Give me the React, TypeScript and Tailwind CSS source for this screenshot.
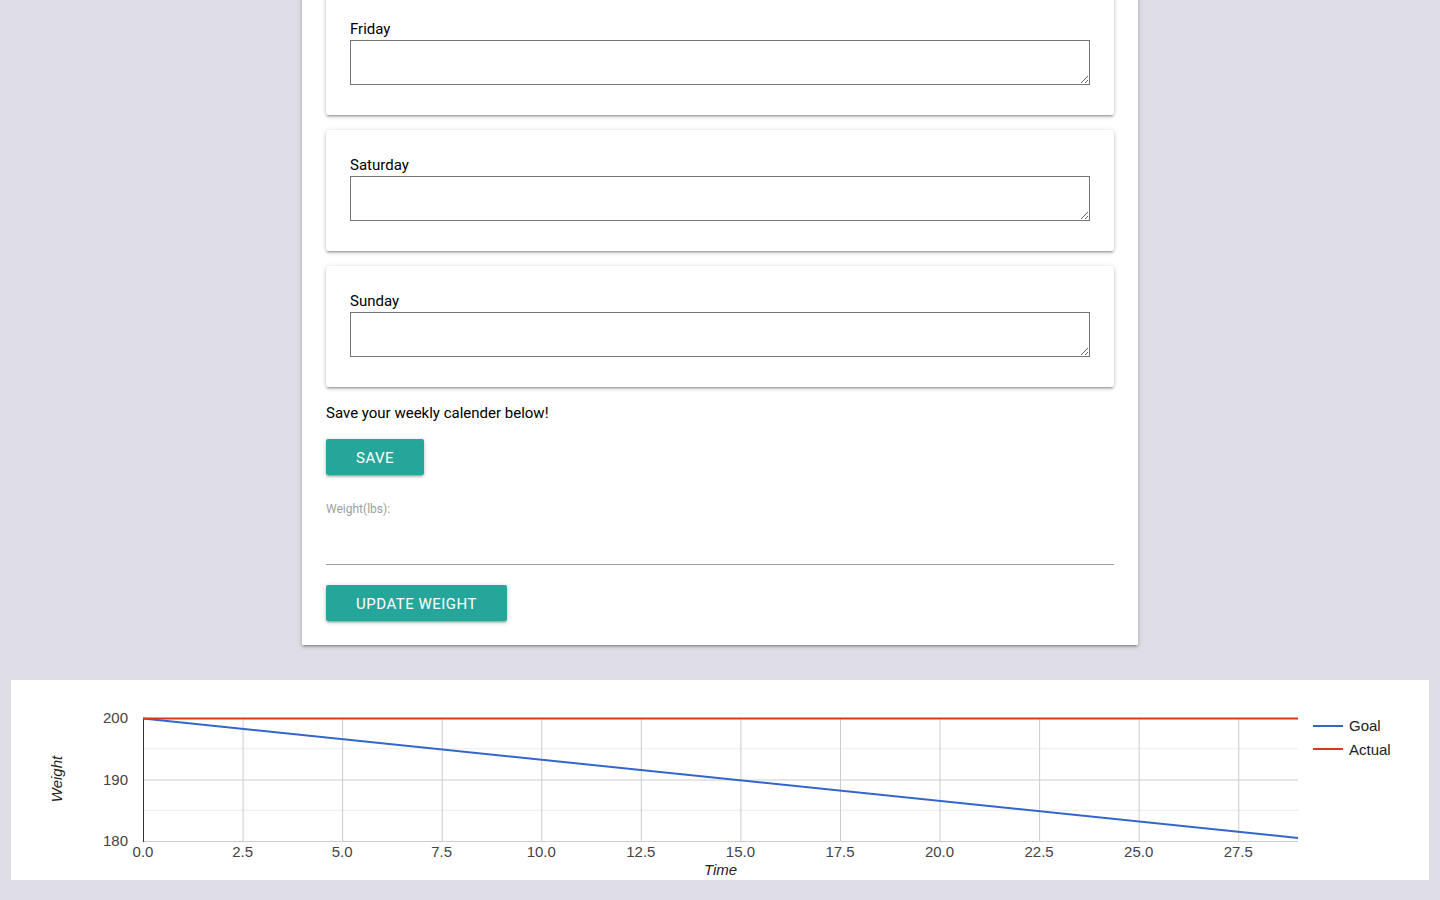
import React from 'react'

const days = ['Friday', 'Saturday', 'Sunday']

function DayCard({ day }: { day: string }) {
  return (
    <div className="bg-white rounded-[2px] px-6 pt-[25px] pb-[30px] shadow-[0_2px_2px_0_rgba(0,0,0,0.14),0_3px_1px_-2px_rgba(0,0,0,0.12),0_1px_5px_0_rgba(0,0,0,0.2)]">
      <label className="block text-[15px] leading-[21px] text-black">{day}</label>
      <textarea className="block w-full h-[45px] border border-[#767676] bg-white outline-none resize-y" />
    </div>
  )
}

function WeightChart() {
  const left = 132
  const right = 1287
  const top = 38
  const bottom = 161
  const perUnit = (right - left) / 29
  const ticks = Array.from({ length: 12 }, (_, i) => i * 2.5)
  const yOf = (v: number) => top + ((200 - v) / 20) * (bottom - top)

  return (
    <svg width="1418" height="200" className="block" style={{ fontFamily: '"Liberation Sans", Arial, sans-serif' }}>
      {/* minor gridlines */}
      <line x1={left} x2={right} y1={yOf(195)} y2={yOf(195)} stroke="#ebebeb" />
      <line x1={left} x2={right} y1={yOf(185)} y2={yOf(185)} stroke="#ebebeb" />
      {/* vertical gridlines */}
      {ticks.map(t => (
        <line key={t} x1={left + t * perUnit + 0.5} x2={left + t * perUnit + 0.5} y1={top} y2={bottom} stroke="#cccccc" />
      ))}
      {/* major horizontal */}
      <line x1={left} x2={right} y1={yOf(190) + 0.5} y2={yOf(190) + 0.5} stroke="#cccccc" />
      <line x1={left} x2={right} y1={bottom + 0.5} y2={bottom + 0.5} stroke="#cccccc" />
      <line x1={left + 0.5} x2={left + 0.5} y1={top} y2={bottom + 1} stroke="#333333" />
      {/* data */}
      <line x1={left} y1={top + 0.5} x2={right} y2={158} stroke="#3366cc" strokeWidth="2" />
      <line x1={left} y1={top + 0.5} x2={right} y2={top + 0.5} stroke="#dc3912" strokeWidth="2" />
      {/* y labels */}
      {[200, 190, 180].map(v => (
        <text key={v} x={117} y={yOf(v) + 5} textAnchor="end" fontSize="15" fill="#444444">{v}</text>
      ))}
      {/* x labels */}
      {ticks.map(t => (
        <text key={t} x={left + t * perUnit} y={177} textAnchor="middle" fontSize="15" fill="#444444">{t.toFixed(1)}</text>
      ))}
      <text x={(left + right) / 2} y={195} textAnchor="middle" fontSize="15" fontStyle="italic" fill="#222222">Time</text>
      <text x={51} y={99} textAnchor="middle" fontSize="15" fontStyle="italic" fill="#222222" transform="rotate(-90 51 99)">Weight</text>
      {/* legend */}
      <line x1={1302} x2={1332} y1={46} y2={46} stroke="#3366cc" strokeWidth="2" />
      <text x={1338} y={51} fontSize="15" fill="#222222">Goal</text>
      <line x1={1302} x2={1332} y1={69} y2={69} stroke="#dc3912" strokeWidth="2" />
      <text x={1338} y={75} fontSize="15" fill="#222222">Actual</text>
    </svg>
  )
}

export default function App() {
  return (
    <div className="min-h-screen bg-[#dedde6] pb-[20px] overflow-hidden" style={{ fontFamily: 'Roboto, "Liberation Sans", sans-serif' }}>
      {/* --- WEEKLY PLANNER PANEL --- */}
      <div className="w-[836px] mx-auto bg-white px-6 pb-6 shadow-[0_2px_2px_0_rgba(0,0,0,0.14),0_3px_1px_-2px_rgba(0,0,0,0.12),0_1px_5px_0_rgba(0,0,0,0.2)]">
        <div className="flex flex-col gap-[15px] -mt-[6px]">
          {days.map(d => <DayCard key={d} day={d} />)}
        </div>

        <p className="mt-[16px] text-[15px] leading-[20px] text-black">Save your weekly calender below!</p>

        <button className="mt-[16px] h-[36px] px-[30px] bg-[#26a69a] text-white text-[15px] leading-[38px] font-normal tracking-[0.5px] uppercase rounded-[2px] shadow-[0_2px_2px_0_rgba(0,0,0,0.14),0_3px_1px_-2px_rgba(0,0,0,0.12),0_1px_5px_0_rgba(0,0,0,0.2)]">
          Save
        </button>

        <div className="mt-[28px]">
          <label className="block text-[12px] leading-[12px] text-[#9e9e9e]">Weight(lbs):</label>
          <input className="block w-full h-[50px] border-b border-[#9e9e9e] outline-none bg-transparent" />
        </div>

        <button className="mt-[20px] h-[36px] px-[30px] bg-[#26a69a] text-white text-[15px] leading-[38px] font-normal tracking-[0.5px] uppercase rounded-[2px] shadow-[0_2px_2px_0_rgba(0,0,0,0.14),0_3px_1px_-2px_rgba(0,0,0,0.12),0_1px_5px_0_rgba(0,0,0,0.2)]">
          Update Weight
        </button>
      </div>

      {/* --- CHART --- */}
      <div className="mt-[35px] mx-[11px] bg-white h-[200px]">
        <WeightChart />
      </div>
    </div>
  )
}
